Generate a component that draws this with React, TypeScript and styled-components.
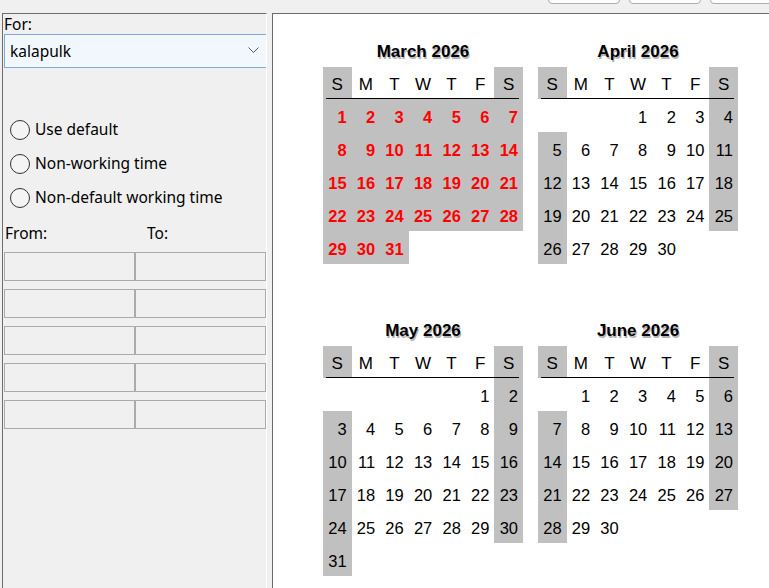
import React from "react";
import styled, { createGlobalStyle } from "styled-components";

const Global = createGlobalStyle`
  html, body { margin: 0; padding: 0; background: #f0f0f0; }
  body { width: 769px; height: 588px; overflow: hidden; font-family: "Noto Sans", sans-serif; }
  #root { width: 769px; height: 588px; }
`;

const Screen = styled.div`
  display: flex;
  flex-direction: column;
  width: 769px;
  height: 588px;
  overflow: hidden;
`;

const TopBar = styled.div`
  height: 13px;
  flex-shrink: 0;
  display: flex;
  gap: 9px;
  padding-left: 548px;
  box-sizing: border-box;
`;

const TopButton = styled.div`
  flex-shrink: 0;
  width: 72px;
  height: 24px;
  margin-top: -20px;
  box-sizing: border-box;
  border: 1px solid #adadad;
  border-radius: 4px;
  background: #fdfdfd;
`;

const Main = styled.div`
  flex: 1;
  min-height: 0;
  display: flex;
  gap: 5px;
  padding-left: 2px;
`;

const LeftPanel = styled.div`
  width: 265px;
  flex-shrink: 0;
  box-sizing: border-box;
  display: flex;
  flex-direction: column;
  padding: 1px 0 0 1px;
  border-top: 1px solid #6d6d6d;
  border-left: 1px solid #6d6d6d;
  border-right: 1px solid #ffffff;
  color: #000;
  font-size: 15.5px;
`;

const Label = styled.div`
  line-height: 19px;
  height: 19px;
`;

const Combo = styled.div`
  height: 34px;
  box-sizing: border-box;
  display: flex;
  align-items: center;
  justify-content: space-between;
  padding: 0 7px 1px 5px;
  border: 1px solid #7eaad6;
  border-right: none;
  background: #f1f7fd;
  line-height: 20px;
`;

const RadioGroup = styled.div`
  margin-top: 45px;
  display: flex;
  flex-direction: column;
`;

const RadioRow = styled.div`
  height: 34px;
  display: flex;
  align-items: center;
  gap: 5px;
  padding-left: 6px;
`;

const RadioCircle = styled.span`
  width: 20px;
  height: 20px;
  box-sizing: border-box;
  border-radius: 50%;
  border: 1px solid #333333;
  background: #f4f4f4;
  flex-shrink: 0;
`;

const RadioText = styled.span`
  line-height: 20px;
  padding-bottom: 2px;
`;

const RangeLabels = styled.div`
  margin-top: 8px;
  display: flex;
  line-height: 20px;
  height: 20px;
`;

const RangeLabel = styled.span<{ $w?: number }>`
  width: ${(p) => (p.$w ? `${p.$w}px` : "auto")};
  padding-left: 1px;
`;

const FieldGrid = styled.div`
  margin-top: 9px;
  display: grid;
  grid-template-columns: 131px 131px;
  grid-auto-rows: 29px;
  row-gap: 8px;
`;

const Field = styled.div`
  box-sizing: border-box;
  border: 1px solid #ababab;
  background: #f0f0f0;
`;

const RightPanel = styled.div`
  flex: 1;
  box-sizing: border-box;
  border-top: 1px solid #6d6d6d;
  border-left: 1px solid #6d6d6d;
  background: #ffffff;
  padding: 27px 0 0 50px;
`;

const Calendars = styled.div`
  display: grid;
  grid-template-columns: 200px 200px;
  column-gap: 15px;
  row-gap: 23px;
`;

const Month = styled.div`
  display: flex;
  flex-direction: column;
`;

const MonthTitle = styled.div`
  font-family: "Liberation Sans", Arial, sans-serif;
  font-weight: bold;
  font-size: 17px;
  line-height: 20px;
  height: 19px;
  padding-top: 1px;
  text-align: center;
  color: #000;
  text-shadow: 1px 2px 0 #b4b4b4;
  margin-bottom: 6px;
`;

const DayGrid = styled.div`
  position: relative;
  display: grid;
  grid-template-columns: repeat(7, 1fr);
  grid-template-rows: 32px repeat(6, 33px);
  font-family: "Liberation Sans", Arial, sans-serif;
  &::after {
    content: "";
    position: absolute;
    top: 31px;
    left: 3px;
    right: 4px;
    height: 1px;
    background: #000;
  }
`;

const HeadCell = styled.div<{ $shade: boolean }>`
  display: flex;
  align-items: center;
  justify-content: center;
  padding-top: 3px;
  box-sizing: border-box;
  font-size: 17px;
  color: #000;
  background: ${(p) => (p.$shade ? "#c0c0c0" : "transparent")};
`;

const DayCell = styled.div<{ $shade: boolean; $red: boolean }>`
  display: flex;
  align-items: center;
  justify-content: flex-end;
  padding: 4px 5px 0 0;
  box-sizing: border-box;
  font-size: 16.5px;
  font-weight: ${(p) => (p.$red ? "bold" : "normal")};
  color: ${(p) => (p.$red ? "#ff0000" : "#000")};
  background: ${(p) => (p.$shade ? "#c0c0c0" : "transparent")};
`;

const Chevron = () => (
  <svg width="11" height="7" viewBox="0 0 11 7">
    <polyline points="0.5,0.5 5.5,5.5 10.5,0.5" fill="none" stroke="#5a5a5a" strokeWidth="1" />
  </svg>
);

type MonthInfo = { name: string; start: number; days: number; exception: boolean };

const months: MonthInfo[] = [
  { name: "March 2026", start: 0, days: 31, exception: true },
  { name: "April 2026", start: 3, days: 30, exception: false },
  { name: "May 2026", start: 5, days: 31, exception: false },
  { name: "June 2026", start: 1, days: 30, exception: false },
];

const heads = ["S", "M", "T", "W", "T", "F", "S"];

const MonthView = ({ m }: { m: MonthInfo }) => {
  const cells: (number | null)[] = [];
  for (let i = 0; i < m.start; i++) cells.push(null);
  for (let d = 1; d <= m.days; d++) cells.push(d);
  while (cells.length % 7 !== 0) cells.push(null);
  return (
    <Month>
      <MonthTitle>{m.name}</MonthTitle>
      <DayGrid>
        {heads.map((h, i) => (
          <HeadCell key={`h${i}`} $shade={i === 0 || i === 6}>
            {h}
          </HeadCell>
        ))}
        {cells.map((d, i) => {
          const col = i % 7;
          const weekend = col === 0 || col === 6;
          const shade = d !== null && (weekend || m.exception);
          return (
            <DayCell key={i} $shade={shade} $red={m.exception && d !== null}>
              {d ?? ""}
            </DayCell>
          );
        })}
      </DayGrid>
    </Month>
  );
};

export default function App() {
  return (
    <>
      <Global />
      <Screen>
        <TopBar>
          <TopButton />
          <TopButton />
          <TopButton />
        </TopBar>
        <Main>
          <LeftPanel>
            <Label>For:</Label>
            <Combo>
              <span>kalapulk</span>
              <Chevron />
            </Combo>
            <RadioGroup>
              <RadioRow>
                <RadioCircle />
                <RadioText>Use default</RadioText>
              </RadioRow>
              <RadioRow>
                <RadioCircle />
                <RadioText>Non-working time</RadioText>
              </RadioRow>
              <RadioRow>
                <RadioCircle />
                <RadioText>Non-default working time</RadioText>
              </RadioRow>
            </RadioGroup>
            <RangeLabels>
              <RangeLabel $w={141}>From:</RangeLabel>
              <RangeLabel>To:</RangeLabel>
            </RangeLabels>
            <FieldGrid>
              {Array.from({ length: 10 }).map((_, i) => (
                <Field key={i} />
              ))}
            </FieldGrid>
          </LeftPanel>
          <RightPanel>
            <Calendars>
              {months.map((m) => (
                <MonthView key={m.name} m={m} />
              ))}
            </Calendars>
          </RightPanel>
        </Main>
      </Screen>
    </>
  );
}
